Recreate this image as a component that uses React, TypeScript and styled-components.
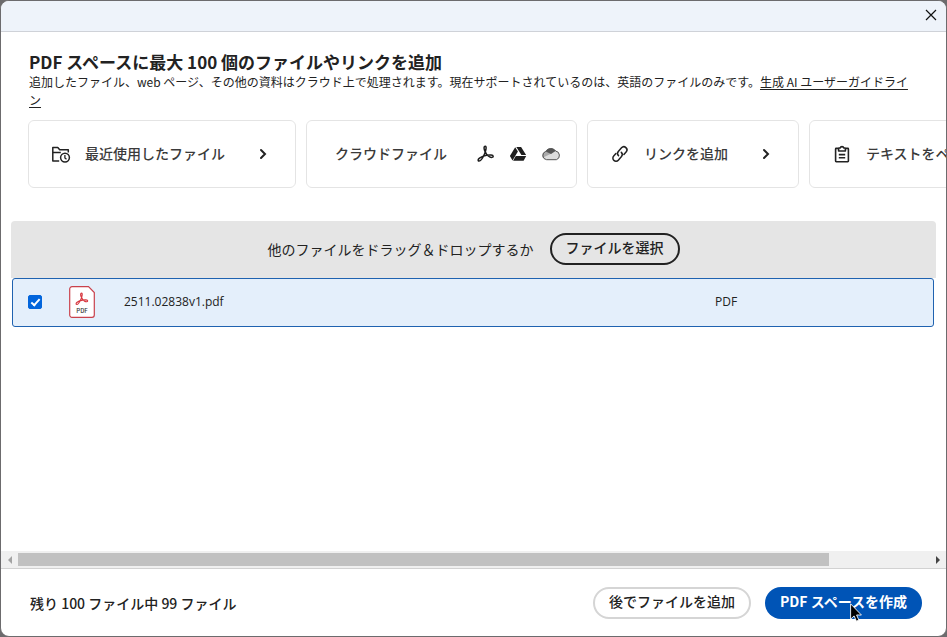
import React from "react";
import styled, { createGlobalStyle, css } from "styled-components";

const GlobalStyle = createGlobalStyle`
  *, *::before, *::after { box-sizing: border-box; }
  body {
    margin: 0;
    background: #6c6b6d;
    color: #222;
    font-family: "Noto Sans CJK JP", "Noto Sans", sans-serif;
    font-size: 14px;
  }
  button, input { font: inherit; color: inherit; margin: 0; }
`;

const Dialog = styled.div`
  display: flex;
  flex-direction: column;
  min-height: 100vh;
  border: 1px solid #6c6b6d;
  border-radius: 9px;
  background: #fff;
  overflow: hidden;
`;

const TitleBar = styled.header`
  display: flex;
  justify-content: flex-end;
  height: 31px;
  background: #eef3fa;
  border-bottom: 1px solid #cfd2d8;
`;

const CloseButton = styled.button`
  display: flex;
  align-items: center;
  justify-content: center;
  width: 30px;
  padding: 0;
  padding-bottom: 2px;
  border: 0;
  background: none;
`;

const Content = styled.main`
  flex: 1;
  display: flex;
  flex-direction: column;
`;

const Intro = styled.section`
  padding: 19px 28px 11px;
`;

const Heading = styled.h1`
  margin: 0;
  font-size: 17px;
  line-height: 22px;
  font-weight: 700;
`;

const Description = styled.p`
  margin: 0;
  font-size: 12px;
  line-height: 18px;
  font-weight: 400;
`;

const GuideLink = styled.a`
  color: inherit;
  text-decoration: underline;
  text-underline-offset: 2px;
`;

const Sources = styled.div`
  display: flex;
  gap: 10px;
  padding-left: 27px;
  overflow: hidden;
`;

const SourceCard = styled.button<{ $width: number }>`
  flex: 0 0 ${(p) => p.$width}px;
  display: flex;
  align-items: center;
  height: 68px;
  padding: 0 24px 0 22px;
  border: 1px solid #e4e4e4;
  border-radius: 6px;
  background: #fff;
  color: #3a3a3a;
  font-weight: 500;
  text-align: left;
  white-space: nowrap;
`;

const SourceLabel = styled.span`
  flex: 1;
  padding: 0 0 2px 14px;
  line-height: 20px;
`;

const CloudLabel = styled(SourceLabel)`
  padding-left: 6px;
`;

const CloudIcons = styled.span`
  display: flex;
  align-items: center;
  gap: 14px;
  margin-right: -9px;
`;

const Files = styled.section`
  flex: 1;
  padding: 33px 10px 0;
`;

const DropZone = styled.div`
  display: flex;
  align-items: center;
  justify-content: center;
  gap: 16px;
  height: 57px;
  padding-bottom: 2px;
  border-radius: 4px 4px 0 0;
  background: #e5e5e5;
`;

const pill = css`
  height: 32px;
  border-radius: 16px;
  line-height: 20px;
  padding: 0 14px 4px;
  white-space: nowrap;
`;

const PickButton = styled.button`
  ${pill}
  border: 2px solid #222;
  background: transparent;
  font-weight: 500;
`;

const FileTable = styled.table`
  width: calc(100% - 3px);
  margin-left: 1px;
  border: 1px solid #1f62b0;
  border-radius: 3px;
  border-spacing: 0;
  background: #e4effb;
  table-layout: fixed;
  font-family: "Open Sans", "Noto Sans CJK JP", sans-serif;
  font-size: 12px;
`;

const Cell = styled.td<{ $width?: string }>`
  width: ${(p) => p.$width ?? "auto"};
  height: 47px;
  padding: 0 0 1px;
  line-height: 20px;
  vertical-align: middle;

  svg { display: block; }
`;

const Check = styled.input`
  appearance: none;
  display: grid;
  place-items: center;
  width: 14px;
  height: 14px;
  margin-left: 15px;
  border: 1px solid #0265dc;
  border-radius: 2px;

  &:checked {
    background: #0265dc;
  }
  &:checked::after {
    content: "";
    width: 5px;
    height: 9px;
    margin-bottom: 2px;
    border: solid #fff;
    border-width: 0 2px 2px 0;
    transform: rotate(42deg);
  }
`;

const ScrollBar = styled.div`
  display: flex;
  height: 17px;
  background: #f0f0f0;
`;

const ScrollArrow = styled.button`
  display: flex;
  align-items: center;
  justify-content: center;
  width: 17px;
  padding: 0;
  border: 0;
  background: none;
`;

const ScrollTrack = styled.div`
  flex: 1;
  padding: 2px 0;
`;

const ScrollThumb = styled.div`
  width: 89%;
  height: 13px;
  background: #c1c1c1;
`;

const Footer = styled.footer`
  display: flex;
  align-items: center;
  gap: 14px;
  height: 68px;
  padding: 0 24px 0 29px;
  border-top: 1px solid #d2d2d2;
`;

const Remaining = styled.span`
  flex: 1;
  font-weight: 500;
  line-height: 20px;
`;

const LaterButton = styled.button`
  ${pill}
  border: 2px solid #d5d5d5;
  background: #fff;
  font-weight: 500;
`;

const CreateButton = styled.button`
  ${pill}
  position: relative;
  padding: 0 15px 4px;
  border: 0;
  background: #0054b6;
  color: #fff;
  font-weight: 700;
`;

const Pointer = styled.svg`
  position: absolute;
  left: 85px;
  top: 16px;
`;

const trefoil =
  "M8.2 1.2C6.7 1.2 6.9 3.6 7.6 5.6C8.5 8.3 10.3 10.7 12.6 11.9C14.4 12.8 16.3 12.5 16.2 11.2C16.1 9.7 12.7 9.7 9.6 10.3C6.7 10.8 4.1 11.9 2.5 13.1C.9 14.3.7 15.9 2 16C3.7 16.1 6 12.4 7.5 9C8.9 5.8 9.9 1.2 8.2 1.2Z";

const Chevron = () => (
  <svg width="16" height="16" viewBox="0 0 16 16" fill="none" stroke="#222" strokeWidth="2" aria-hidden="true">
    <path d="M6 4l4 4-4 4" strokeLinecap="round" />
  </svg>
);

const FolderClock = () => (
  <svg width="20" height="20" viewBox="0 0 20 20" fill="none" stroke="#222" strokeWidth="1.5" aria-hidden="true">
    <path d="M8.2 17H1.8V3.6h5l1.9 2.2h8.6v2.6M1.8 8.5h8" strokeLinejoin="round" />
    <circle cx="14" cy="13.6" r="4.4" />
    <path d="M13.9 11v2.9l1.6 1.3" strokeWidth="1.3" />
  </svg>
);

const AcrobatMark = () => (
  <svg width="18" height="18" viewBox="0 0 18 18" fill="none" stroke="#1c1c1c" strokeWidth="1.5" aria-hidden="true">
    <path d={trefoil} />
  </svg>
);

const DriveMark = () => (
  <svg width="18" height="18" viewBox="0 0 18 18" fill="#1f1f1f" aria-hidden="true">
    <path d="M6.2 2.2L.9 10.9l2.6 4.6 5.4-8.9zM7.3 2h4.8l5 8.1h-4.7zM6.8 11.1h10.4l-2.6 4.7H4.1z" />
  </svg>
);

const CloudMark = () => (
  <svg width="20" height="18" viewBox="0 0 20 18" aria-hidden="true">
    <path d="M5.6 14.7a4.3 4.3 0 01-.9-8.3A6 6 0 0114.6 6a4.5 4.5 0 01.8 8.7z" fill="#dcdcdc" />
    <path d="M1.5 12.8L11 8.3 4.7 6.4c-2.8.5-4.2 3.6-3.2 6.4z" fill="#aaa" />
    <path d="M4.7 6.4C7 2.2 12.4 2.1 14.6 6L10 9z" fill="#555" />
    <path d="M5.6 14.7a4.3 4.3 0 01-.9-8.3A6 6 0 0114.6 6a4.5 4.5 0 01.8 8.7z" fill="none" stroke="#555" />
  </svg>
);

const LinkMark = () => (
  <svg width="20" height="20" viewBox="0 0 20 20" fill="none" stroke="#222" strokeWidth="1.5" strokeLinecap="round" aria-hidden="true">
    <path d="M8.5 11.6a3.1 3.1 0 01-.2-4.2l3.2-3.6a3.1 3.1 0 014.6 4.2l-2.2 2.4" />
    <path d="M11.3 8.4a3.1 3.1 0 01.2 4.2l-3.2 3.6A3.1 3.1 0 013.7 12l2.2-2.4" />
  </svg>
);

const ClipboardMark = () => (
  <svg width="20" height="20" viewBox="0 0 20 20" fill="none" stroke="#222" strokeWidth="1.6" aria-hidden="true">
    <path d="M6.4 4.4H4.2a.6.6 0 00-.6.6v12.1a.6.6 0 00.6.6h11.6a.6.6 0 00.6-.6V5a.6.6 0 00-.6-.6h-2.2" />
    <path d="M6.6 7V4.6a.6.6 0 01.6-.6h.9a2 2 0 013.8 0h.9a.6.6 0 01.6.6V7z" strokeLinejoin="round" />
    <path d="M6.8 10.6h6.4M6.8 13.8h6.4" />
  </svg>
);

const PdfFile = () => (
  <svg width="26" height="32" viewBox="0 0 26 32" role="img" aria-label="PDF">
    <path d="M3 .7h16.5l5.8 5.8V29a2.3 2.3 0 01-2.3 2.3H3A2.3 2.3 0 01.7 29V3A2.3 2.3 0 013 .7z" fill="#fff" stroke="#c9424c" strokeWidth="1.2" />
    <path d={trefoil} transform="translate(6.2 6.2) scale(.77)" fill="none" stroke="#d7373f" strokeWidth="1.5" />
    <text x="13" y="27" textAnchor="middle" fontSize="6" fontWeight="500" fontFamily="Noto Sans CJK JP, sans-serif" fill="#333">
      PDF
    </text>
  </svg>
);

export default function App() {
  return (
    <>
      <GlobalStyle />
      <Dialog role="dialog" aria-labelledby="dialog-title">
        <TitleBar>
          <CloseButton aria-label="閉じる">
            <svg width="12" height="12" viewBox="0 0 12 12" stroke="#111" strokeWidth="1.2">
              <path d="M1 1l10 10M11 1L1 11" />
            </svg>
          </CloseButton>
        </TitleBar>
        <Content>
          <Intro>
            <Heading id="dialog-title">PDF スペースに最大 100 個のファイルやリンクを追加</Heading>
            <Description>
              追加したファイル、web ページ、その他の資料はクラウド上で処理されます。現在サポートされているのは、英語のファイルのみです。
              <GuideLink href="#guide">生成 AI ユーザーガイドライン</GuideLink>
            </Description>
          </Intro>
          <Sources>
            <SourceCard $width={268}>
              <FolderClock />
              <SourceLabel>最近使用したファイル</SourceLabel>
              <Chevron />
            </SourceCard>
            <SourceCard $width={271}>
              <CloudLabel>クラウドファイル</CloudLabel>
              <CloudIcons>
                <AcrobatMark />
                <DriveMark />
                <CloudMark />
              </CloudIcons>
            </SourceCard>
            <SourceCard $width={212}>
              <LinkMark />
              <SourceLabel>リンクを追加</SourceLabel>
              <Chevron />
            </SourceCard>
            <SourceCard $width={268}>
              <ClipboardMark />
              <SourceLabel>テキストをペースト</SourceLabel>
              <Chevron />
            </SourceCard>
          </Sources>
          <Files>
            <DropZone>
              <span>他のファイルをドラッグ＆ドロップするか</span>
              <PickButton>ファイルを選択</PickButton>
            </DropZone>
            <FileTable>
              <tbody>
                <tr>
                  <Cell $width="56px">
                    <Check type="checkbox" defaultChecked aria-label="2511.02838v1.pdf" />
                  </Cell>
                  <Cell $width="55px">
                    <PdfFile />
                  </Cell>
                  <Cell>2511.02838v1.pdf</Cell>
                  <Cell $width="218px">PDF</Cell>
                </tr>
              </tbody>
            </FileTable>
          </Files>
        </Content>
        <ScrollBar>
          <ScrollArrow aria-label="左へスクロール">
            <svg width="8" height="8" viewBox="0 0 8 8" fill="#a3a3a3">
              <path d="M6 0v8L2 4z" />
            </svg>
          </ScrollArrow>
          <ScrollTrack>
            <ScrollThumb />
          </ScrollTrack>
          <ScrollArrow aria-label="右へスクロール">
            <svg width="8" height="8" viewBox="0 0 8 8" fill="#444">
              <path d="M2 0v8l4-4z" />
            </svg>
          </ScrollArrow>
        </ScrollBar>
        <Footer>
          <Remaining>残り 100 ファイル中 99 ファイル</Remaining>
          <LaterButton>後でファイルを追加</LaterButton>
          <CreateButton>
            PDF スペースを作成
            <Pointer width="12" height="19" viewBox="0 0 12 19" aria-hidden="true">
              <path d="M.6.8v15.4l3.5-3.3 2.3 5.3 2.5-1.1-2.3-5.1h4.8z" fill="#000" stroke="#fff" strokeWidth=".9" />
            </Pointer>
          </CreateButton>
        </Footer>
      </Dialog>
    </>
  );
}
